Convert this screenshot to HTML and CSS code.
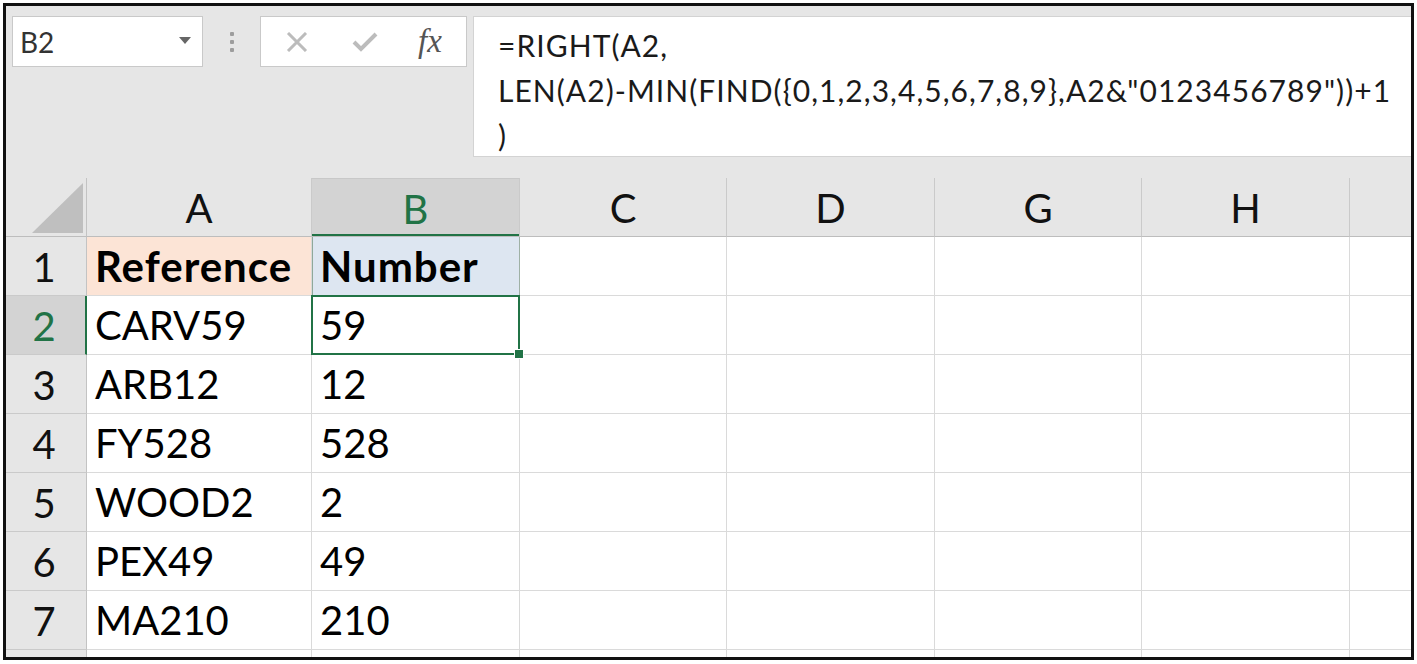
FILE: index.html
```html
<!DOCTYPE html>
<html lang="en">
<head>
<meta charset="utf-8">
<title>Excel - extract number</title>
<link rel="stylesheet" href="styles.css">
</head>
<body>
<div class="frame">
  <div class="fbar">
    <div class="namebox">
      <span class="name">B2</span>
      <svg class="caret" width="12" height="7" viewBox="0 0 12 7"><path d="M0 0H12L6 7Z" fill="#666"/></svg>
    </div>
    <div class="grip"><i></i><i></i><i></i></div>
    <div class="btns">
      <svg class="ico-x" width="22" height="20" viewBox="0 0 22 20"><path d="M2 1L20 19M20 1L2 19" stroke="#bcbcbc" stroke-width="3" fill="none"/></svg>
      <svg class="ico-check" width="26" height="20" viewBox="0 0 26 20"><path d="M2 10L9 17L24 2" stroke="#bcbcbc" stroke-width="4" fill="none"/></svg>
      <span class="fx">fx</span>
    </div>
    <div class="formula">
      <div class="fline">=RIGHT(A2,</div>
      <div class="fline">LEN(A2)-MIN(FIND({0,1,2,3,4,5,6,7,8,9},A2&amp;"0123456789"))+1</div>
      <div class="fline">)</div>
    </div>
  </div>
  <div class="sheet">
    <div class="corner"><svg width="81" height="58" viewBox="0 0 81 58"><path d="M26 55H77V5Z" fill="#bfbfbf"/></svg></div>
    <div class="ch">A</div>
    <div class="ch ch-sel">B</div>
    <div class="ch">C</div>
    <div class="ch">D</div>
    <div class="ch">G</div>
    <div class="ch">H</div>
    <div class="ch ch-last"></div>

    <div class="rh">1</div>
    <div class="c hdr-a">Reference</div>
    <div class="c hdr-b">Number</div>
    <div class="c"></div><div class="c"></div><div class="c"></div><div class="c"></div><div class="c"></div>

    <div class="rh rh-sel">2</div>
    <div class="c">CARV59</div>
    <div class="c sel">59</div>
    <div class="c"></div><div class="c"></div><div class="c"></div><div class="c"></div><div class="c"></div>

    <div class="rh">3</div>
    <div class="c">ARB12</div>
    <div class="c">12</div>
    <div class="c"></div><div class="c"></div><div class="c"></div><div class="c"></div><div class="c"></div>

    <div class="rh">4</div>
    <div class="c">FY528</div>
    <div class="c">528</div>
    <div class="c"></div><div class="c"></div><div class="c"></div><div class="c"></div><div class="c"></div>

    <div class="rh">5</div>
    <div class="c">WOOD2</div>
    <div class="c">2</div>
    <div class="c"></div><div class="c"></div><div class="c"></div><div class="c"></div><div class="c"></div>

    <div class="rh">6</div>
    <div class="c">PEX49</div>
    <div class="c">49</div>
    <div class="c"></div><div class="c"></div><div class="c"></div><div class="c"></div><div class="c"></div>

    <div class="rh">7</div>
    <div class="c">MA210</div>
    <div class="c">210</div>
    <div class="c"></div><div class="c"></div><div class="c"></div><div class="c"></div><div class="c"></div>

    <div class="rh rh-end"></div>
    <div class="c c-end"></div><div class="c c-end"></div><div class="c c-end"></div><div class="c c-end"></div><div class="c c-end"></div><div class="c c-end"></div><div class="c c-end"></div>
  </div>
</div>
</body>
</html>
```

FILE: styles.css
```css
* { box-sizing: border-box; }

html, body {
  margin: 0;
  padding: 0;
  background: #ffffff;
}

body {
  width: 1417px;
  height: 664px;
  overflow: hidden;
  font-family: Lato, "Open Sans", sans-serif;
}

.frame {
  margin: 3px 0 0 3px;
  width: 1411px;
  height: 657px;
  border: 3px solid #111111;
  background: #ffffff;
  display: flex;
  flex-direction: column;
  overflow: hidden;
}

/* ---------- formula bar ---------- */
.fbar {
  height: 172px;
  flex: none;
  background: #e6e6e6;
  display: flex;
  align-items: flex-start;
  padding: 10px 0 0 6px;
}

.namebox {
  width: 191px;
  height: 51px;
  background: #ffffff;
  border: 1px solid #c9c9c9;
  display: flex;
  align-items: center;
  justify-content: space-between;
  padding: 0 11px 0 7px;
}

.name {
  font-size: 28px;
  color: #333333;
  line-height: 1;
  padding-top: 1px;
}

.caret { display: block; margin-top: -2px; }

.grip {
  width: 57px;
  height: 51px;
  display: flex;
  flex-direction: column;
  align-items: center;
  justify-content: center;
  gap: 4px;
}

.grip i {
  display: block;
  width: 4px;
  height: 4px;
  border-radius: 1px;
  background: #9d9d9d;
}

.btns {
  width: 207px;
  height: 51px;
  background: #ffffff;
  border: 1px solid #c9c9c9;
  display: flex;
  align-items: center;
}

.ico-x { margin-left: 25px; display: block; }
.ico-check { margin-left: 44px; display: block; }

.fx {
  margin-left: 40px;
  font-family: "Liberation Serif", "DejaVu Serif", serif;
  font-style: italic;
  font-size: 33px;
  color: #555555;
  line-height: 1;
  margin-top: -1px;
}

.formula {
  flex: 1;
  margin-left: 6px;
  height: 141px;
  background: #ffffff;
  border: 1px solid #d3d3d3;
  border-right: none;
  padding: 6px 0 0 24px;
  font-size: 30px;
  letter-spacing: 1.05px;
  line-height: 45px;
  color: #1a1a1a;
  white-space: nowrap;
}

/* ---------- sheet ---------- */
.sheet {
  flex: 1;
  display: grid;
  grid-template-columns: 81px 225px 208px 207px 208px 207px 208px 1fr;
  grid-template-rows: repeat(8, 59px) 1fr;
  font-size: 40px;
  color: #000000;
}

.corner {
  background: #e6e6e6;
  border-right: 1px solid #c3c3c3;
  border-bottom: 1px solid #bdbdbd;
}

.corner svg { display: block; }

.ch {
  background: #e6e6e6;
  border-right: 1px solid #cacaca;
  border-bottom: 1px solid #bdbdbd;
  display: flex;
  align-items: center;
  justify-content: center;
  line-height: 1;
  color: #111111;
  padding-top: 2px;
}

.ch-sel {
  background: #d3d3d3;
  color: #217346;
  box-shadow: inset 0 -2px 0 #217346;
  border-top: 1px solid #c8c8c8;
}

.ch-last { border-right: none; }

.rh {
  background: #e6e6e6;
  border-right: 1px solid #c3c3c3;
  border-bottom: 1px solid #cacaca;
  display: flex;
  align-items: center;
  justify-content: center;
  line-height: 1;
  color: #111111;
  padding: 2px 4px 0 0;
}

.rh-sel {
  background: #d3d3d3;
  color: #217346;
  border-right: 2px solid #217346;
  padding-right: 3px;
}

.rh-end { border-bottom: none; }

.c {
  border-right: 1px solid #dadada;
  border-bottom: 1px solid #dadada;
  padding: 0 0 0 8px;
  line-height: 58px;
  white-space: nowrap;
}

.c:nth-child(8n) { border-right: none; }

.c-end { border-bottom: none; }

.hdr-a {
  background: #fce4d6;
  font-weight: 700;
  font-size: 42px;
  letter-spacing: 1px;
}

.hdr-b {
  background: #dde6f1;
  font-weight: 700;
  font-size: 42px;
  letter-spacing: 1px;
  border-right-color: #9fb1a6;
  box-shadow: inset 1px 0 0 #8fa99a;
}

.sel {
  position: relative;
}

.sel::after {
  content: "";
  position: absolute;
  top: -1px;
  left: -1px;
  right: -1px;
  bottom: -1px;
  border: 2px solid #217346;
}

.sel::before {
  content: "";
  position: absolute;
  right: -5px;
  bottom: -5px;
  width: 8px;
  height: 8px;
  background: #217346;
  border: 1px solid #ffffff;
  z-index: 2;
}
```
